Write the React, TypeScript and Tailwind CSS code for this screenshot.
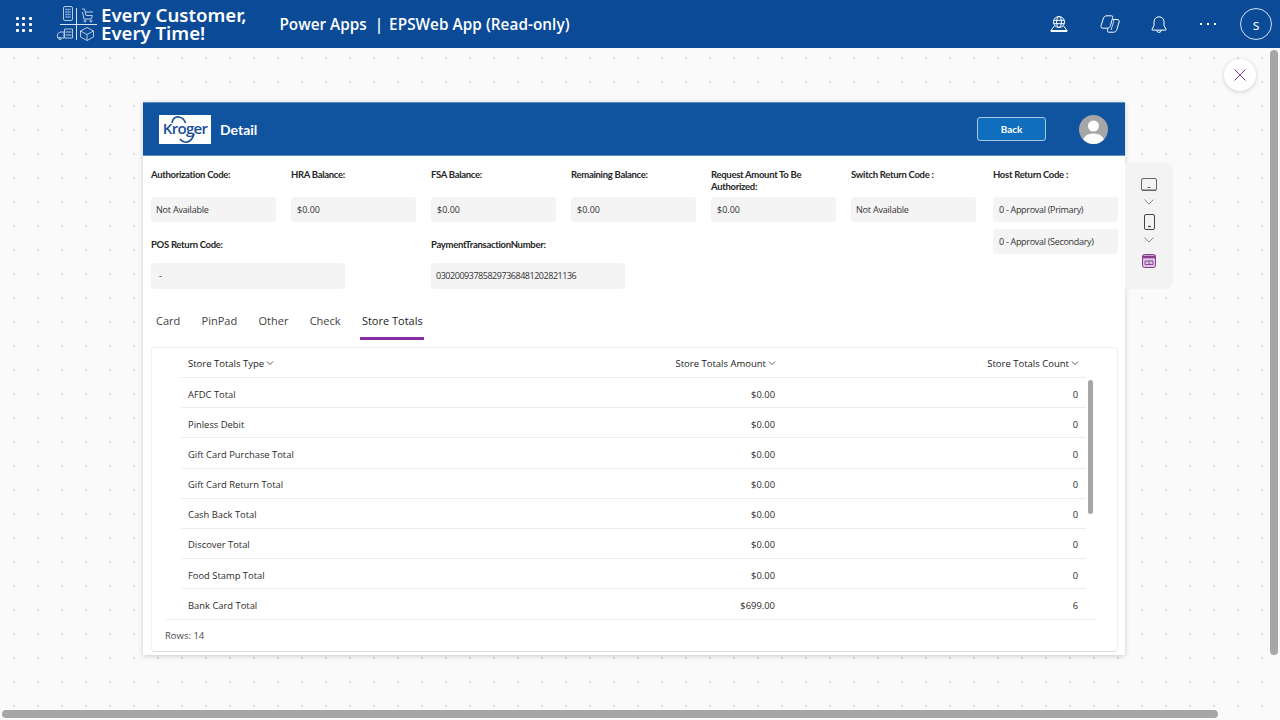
import React from "react";

const segoe = "font-['Open_Sans','Noto_Sans',sans-serif]";
const lato = "font-['Lato','Noto_Sans',sans-serif]";
const labelClass = `text-[9.5px] font-bold leading-[12px] tracking-[-0.3px] text-[#252525] ${lato}`;

function Waffle() {
  const dots = [0, 1, 2, 3, 4, 5, 6, 7, 8];
  return (
    <div className="grid w-[16px] grid-cols-3 gap-[3px]">
      {dots.map((d) => (
        <span key={d} className="h-[3px] w-[3px] rounded-[1px] bg-white" />
      ))}
    </div>
  );
}

function EpsLogo() {
  return (
    <svg width="41" height="36" viewBox="0 0 41 36" fill="none" stroke="#b9cbe2" strokeWidth="1" className="shrink-0">
      <rect x="6.500" y="0.500" width="9" height="14" rx="1.500" />
      <path d="M8.500 3.500h5M8.500 6h5M8.500 8.500h5M8.500 11h5" strokeWidth="1.300" strokeDasharray="1.300 0.700" />
      <path d="M3 18.500h37" stroke="#d7e2ef" />
      <path d="M19.500 2v32" stroke="#d7e2ef" />
      <path d="M25 3h2.500l1.500 6.500h6.500l-1.500 3.500h-7L25.500 6M28 6h8" />
      <circle cx="28" cy="15" r="1" />
      <circle cx="34" cy="15" r="1" />
      <path d="M0.500 32v-4l2.500-2h4v6zM7.500 32V23h8v9zM8.500 26h6M8.500 29h6" />
      <circle cx="3" cy="32.500" r="1.200" />
      <path d="M30 21.500l6.500 3.500v6l-6.500 3.500-6.500-3.500v-6zM23.500 25l6.500 3.500 6.500-3.500M30 28.500v6" />
    </svg>
  );
}

function GlobeIcon() {
  return (
    <svg width="18" height="18" viewBox="0 0 18 18" fill="none" stroke="#fff" strokeWidth="1">
      <circle cx="9" cy="7" r="5.500" />
      <ellipse cx="9" cy="7" rx="2.400" ry="5.500" />
      <path d="M3.700 5.300h10.600M3.700 8.700h10.600" />
      <path d="M4.400 11L1 15.500h16L13.600 11M1 15.500v1h16v-1" />
    </svg>
  );
}

function CopilotIcon() {
  return (
    <svg width="20" height="18" viewBox="0 0 20 18" fill="none" stroke="#fff" strokeWidth="1">
      <path d="M7 .8h4.500c1 0 1.500.7 1.200 1.700L10.500 10.500c-.5 1.700-1.600 2.700-3.300 2.700H3c-1.600 0-2.400-1-2-2.500L3.500 3C4 1.700 5.300.8 7 .8z" />
      <path d="M12.800 4.500H17c1.700 0 2.500 1 2.100 2.500L16.800 14.700c-.5 1.600-1.700 2.500-3.300 2.500H8.700c-1 0-1.500-.7-1.200-1.700L7.800 13.500" />
      <path d="M12 3.700c1.400.5 2 1.500 1.600 3L11 15" stroke="#c9d8ea" />
    </svg>
  );
}

function BellIcon() {
  return (
    <svg width="16" height="17" viewBox="0 0 16 17" fill="none" stroke="#fff" strokeWidth="1">
      <path d="M8 .8c-3 0-5 2.200-5 5.200v3.600L1 13.400c-.2.400 0 .7.400.7h13.200c.4 0 .6-.3.4-.7L13 9.600V6C13 3 11 .8 8 .8z" />
      <path d="M5.800 14.200a2.200 2.200 0 0 0 4.400 0" />
    </svg>
  );
}

function KrogerLogo() {
  return (
    <div className="relative flex h-[29px] w-[52px] shrink-0 items-center justify-center bg-white">
      <span className="mt-[-1px] font-['Open_Sans',sans-serif] text-[15px] font-semibold leading-none tracking-[-0.7px] text-[#1a4f98]">
        Kroger
      </span>
      <svg width="52" height="29" viewBox="0 0 52 29" fill="none" stroke="#1a4f98" strokeWidth="1.600" className="absolute left-0 top-0">
        <path d="M13 8C14 3 17 1.500 20 2c3 .5 5.500 3 6.500 6" />
        <path d="M21 24c2.500 3.500 6.500 4 9.500 2 2.500-1.700 4-4.500 4.500-7.500" />
      </svg>
    </div>
  );
}

function Avatar() {
  return (
    <div className="h-[29px] w-[29px] shrink-0 overflow-hidden rounded-full bg-[#a6a6a6]">
      <svg width="29" height="29" viewBox="0 0 29 29" fill="#fff">
        <circle cx="14.500" cy="11" r="5.500" />
        <path d="M3.500 29c0-7 4-10.500 11-10.500s11 3.500 11 10.500z" />
      </svg>
    </div>
  );
}

function Field({ label, value, cls }: { label: string; value: string; cls?: string }) {
  return (
    <div className="w-[125px]">
      <div className={`h-[28px] ${labelClass}`}>{label}</div>
      <Box value={value} cls={cls} />
    </div>
  );
}

function Box({ value, cls = "pl-[6px]" }: { value: string; cls?: string }) {
  return (
    <div className={`flex h-[25px] items-center rounded-[3px] bg-[#f4f4f4] text-[9px] text-[#333] ${cls} ${segoe}`}>
      {value}
    </div>
  );
}

const tabs = ["Card", "PinPad", "Other", "Check"];

const rows: [string, string, string][] = [
  ["AFDC Total", "$0.00", "0"],
  ["Pinless Debit", "$0.00", "0"],
  ["Gift Card Purchase Total", "$0.00", "0"],
  ["Gift Card Return Total", "$0.00", "0"],
  ["Cash Back Total", "$0.00", "0"],
  ["Discover Total", "$0.00", "0"],
  ["Food Stamp Total", "$0.00", "0"],
  ["Bank Card Total", "$699.00", "6"],
];

function Caret() {
  return (
    <svg width="8" height="8" viewBox="0 0 8 8" fill="none" stroke="#444" strokeWidth="0.900" className="mb-[3px] ml-[2px]">
      <path d="M1 2.500l3 3 3-3" />
    </svg>
  );
}

function Chevron() {
  return (
    <svg width="12" height="8" viewBox="0 0 12 8" fill="none" stroke="#8a8a8a" strokeWidth="1">
      <path d="M1.500 1.500l4.500 4.500 4.500-4.500" />
    </svg>
  );
}

export default function App() {
  return (
    <div className="relative flex h-[720px] w-[1280px] flex-col overflow-hidden bg-[#fafafa]">
      <header className={`flex h-12 shrink-0 items-center bg-[#0a4a97] text-white ${segoe}`}>
        <div className="ml-4"><Waffle /></div>
        <div className="ml-[25px]"><EpsLogo /></div>
        <div className="ml-[3px] font-['Noto_Sans',sans-serif] text-[18.6px] font-semibold leading-[18px]">
          <div>Every Customer,</div>
          <div>Every Time!</div>
        </div>
        <div className="ml-[33px] flex items-center text-[15.300px] font-semibold">
          <span>Power Apps</span>
          <span className="ml-[8px] mr-[6px]">|</span>
          <span className="tracking-[0.05px]">EPSWeb App (Read-only)</span>
        </div>
        <div className="ml-auto flex items-center">
          <GlobeIcon />
          <div className="ml-[32px]"><CopilotIcon /></div>
          <div className="ml-[31px]"><BellIcon /></div>
          <div className="ml-[33px] flex gap-[5px]">
            <span className="h-[2px] w-[2px] bg-white" />
            <span className="h-[2px] w-[2px] bg-white" />
            <span className="h-[2px] w-[2px] bg-white" />
          </div>
          <div className="ml-[24px] mr-[8px] flex h-8 w-8 items-center justify-center rounded-full border border-[#d5e0ee] text-[14px]">
            s
          </div>
        </div>
      </header>

      <main className="flex flex-1 items-start bg-[radial-gradient(circle,#dcdcdc_1px,transparent_1.200px)] bg-[length:24px_24px] bg-[position:2px_-2px] pl-[143px] pt-[54px]">
        <section className="flex h-[553px] w-[982px] shrink-0 flex-col bg-white shadow-[0_1px_5px_rgba(0,0,0,0.2)]">
          <div className="flex h-[54px] shrink-0 items-center border-y border-[#5f8fc4] bg-[#10539f] pl-4 pr-[17px]">
            <KrogerLogo />
            <h1 className={`ml-[9px] mt-[1px] text-[14px] font-bold text-white ${lato}`}>Detail</h1>
            <button className={`ml-auto h-[24px] w-[69px] rounded-[3px] border border-[#a9c8e8] bg-[#106ebe] text-[10px] font-bold text-white ${lato}`}>
              Back
            </button>
            <div className="ml-[33px]"><Avatar /></div>
          </div>

          <div className="flex pl-2 pt-[13px]">
            <div className="w-[842px]">
              <div className="flex gap-[15px]">
                <Field label="Authorization Code:" value="Not Available" cls="pl-[5px] tracking-[-0.2px]" />
                <Field label="HRA Balance:" value="$0.00" />
                <Field label="FSA Balance:" value="$0.00" />
                <Field label="Remaining Balance:" value="$0.00" />
                <Field label="Request Amount To Be Authorized:" value="$0.00" />
                <Field label="Switch Return Code :" value="Not Available" cls="pl-[5px] tracking-[-0.2px]" />
              </div>
              <div className="mt-[17px] flex gap-[86px]">
                <div className="w-[194px]">
                  <div className={`h-[24px] ${labelClass}`}>POS Return Code:</div>
                  <div className={`flex h-[26px] items-center rounded-[3px] bg-[#f4f4f4] pl-[8px] text-[9px] text-[#333] ${segoe}`}>-</div>
                </div>
                <div className="w-[194px]">
                  <div className={`h-[24px] ${labelClass}`}>PaymentTransactionNumber:</div>
                  <div className={`flex h-[26px] items-center rounded-[3px] bg-[#f4f4f4] pl-[5px] text-[9px] tracking-[-0.47px] text-[#333] ${segoe}`}>030200937858297368481202821136</div>
                </div>
              </div>
            </div>
            <div className="w-[125px]">
              <div className={`h-[28px] ${labelClass}`}>Host Return Code :</div>
              <Box value="0 - Approval (Primary)" cls="pl-[6px] tracking-[-0.3px]" />
              <div className="mt-[7px]"><Box value="0 - Approval (Secondary)" cls="pl-[6px] tracking-[-0.3px]" /></div>
            </div>
          </div>

          <nav className={`mt-[23px] flex h-[28px] shrink-0 gap-[21.300px] pl-[13px] text-[11px] text-[#424242] ${segoe}`}>
            {tabs.map((t) => (
              <div key={t} className="pt-[1px]">{t}</div>
            ))}
            <div className="ml-[-2px] w-[64px] whitespace-nowrap border-b-[3px] border-[#8a2da5] px-[2px] pt-[1px] font-medium text-[#242424]">
              Store Totals
            </div>
          </nav>

          <div className={`relative mx-2 mt-[7px] flex h-[305px] w-[967px] flex-col rounded-[4px] border border-[#f0f0f0] border-b-[#dcdcdc] ${segoe}`}>
            <div className="flex h-[30px] shrink-0 flex-col pl-[29px] pr-[31px]">
              <div className="grid h-[29px] grid-cols-[1fr_200px_303px] items-center pl-[7px] pr-[7px] pt-[3px] text-[9.500px] font-medium text-[#222]">
                <div className="flex items-center">Store Totals Type<Caret /></div>
                <div className="flex items-center justify-end">Store Totals Amount<Caret /></div>
                <div className="flex items-center justify-end">Store Totals Count<Caret /></div>
              </div>
              <div className="h-px shrink-0 bg-[#ebebeb]" />
            </div>
            <div className="pl-[29px] pr-[31px]">
              {rows.map(([a, b, c]) => (
                <div key={a} className="grid h-[30.200px] grid-cols-[1fr_200px_303px] items-center border-b border-[#ededed] pl-[7px] pr-[8px] pt-[4px] text-[9.400px] text-[#2b2b2b]">
                  <div>{a}</div>
                  <div className="text-right">{b}</div>
                  <div className="text-right">{c}</div>
                </div>
              ))}
            </div>
            <div className="ml-[13px] mr-[22px] mt-[-1px] h-px shrink-0 bg-[#ededed]" />
            <div className="pl-[13px] pt-[9px] text-[9.500px] text-[#4a4a4a]">Rows: 14</div>
            <div className="absolute left-[936px] top-[32px] h-[134px] w-[5px] rounded-full bg-[#a6a6a6]" />
          </div>
        </section>

        <aside className="mt-[61px] flex h-[126px] w-[48px] shrink-0 flex-col items-center rounded-r-[8px] bg-[#f3f3f3] pt-[15px]">
          <svg width="16" height="13" viewBox="0 0 16 13" fill="none" stroke="#666" strokeWidth="1">
            <rect x="0.500" y="0.500" width="15" height="12" rx="1.500" />
            <path d="M6.500 9.500h3M1 12.200h14" strokeWidth="1.200" />
          </svg>
          <div className="mt-[7px]"><Chevron /></div>
          <svg width="11" height="16" viewBox="0 0 11 16" fill="none" stroke="#444" strokeWidth="1" className="mt-[8px]">
            <rect x="0.500" y="0.500" width="10" height="15" rx="1.500" />
            <path d="M4 12.500h3" strokeWidth="1.200" />
          </svg>
          <div className="mt-[6px]"><Chevron /></div>
          <svg width="14" height="14" viewBox="0 0 14 14" fill="none" className="mt-[10px]">
            <rect x="0.500" y="0.500" width="13" height="13" rx="2" fill="#dcc5e2" stroke="#8a3b8f" />
            <path d="M0.500 3h13" stroke="#8a3b8f" strokeWidth="2.500" />
            <path d="M3 7h8v3.500H3z" stroke="#8a3b8f" strokeWidth="0.900" />
            <path d="M7 7v3.500" stroke="#8a3b8f" strokeWidth="0.800" />
          </svg>
        </aside>
      </main>

      <button className="absolute left-[1224px] top-[59px] flex h-8 w-8 items-center justify-center rounded-full bg-white shadow-[0_1px_4px_rgba(0,0,0,0.18)]">
        <svg width="12" height="12" viewBox="0 0 12 12" fill="none" stroke="#8a3b8f" strokeWidth="1">
          <path d="M0.500 0.500l11 11M11.500 0.500l-11 11" />
        </svg>
      </button>

      <div className="absolute left-[1270px] top-[50px] h-[605px] w-[8px] rounded-full bg-[#a6a6a6]" />
      <div className="absolute left-[2px] top-[710px] h-[8px] w-[1216px] rounded-full bg-[#a6a6a6]" />
    </div>
  );
}
